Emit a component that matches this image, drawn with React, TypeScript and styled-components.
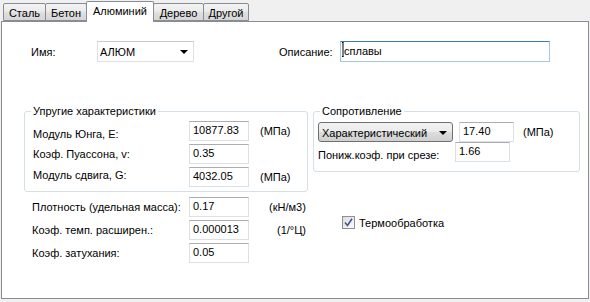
import React from "react";
import styled, { createGlobalStyle } from "styled-components";

const GlobalStyle = createGlobalStyle`
  html, body {
    margin: 0;
    padding: 0;
    background: #f0f0f0;
  }
  body {
    font-family: "Liberation Sans", Arial, sans-serif;
    font-size: 11px;
    color: #000;
  }
  * {
    box-sizing: border-box;
  }
`;

const Window = styled.div`
  width: 590px;
  height: 302px;
  background: #f0f0f0;
`;

const TabStrip = styled.div`
  display: flex;
  align-items: flex-end;
  height: 21px;
  padding-left: 3px;
  position: relative;
  z-index: 1;
`;

const Tab = styled.div<{ $active?: boolean; $width: number }>`
  display: flex;
  justify-content: center;
  align-items: ${(p) => (p.$active ? "flex-start" : "center")};
  width: ${(p) => p.$width}px;
  height: ${(p) => (p.$active ? "21px" : "18px")};
  padding-top: ${(p) => (p.$active ? "3px" : "1px")};
  margin: ${(p) => (p.$active ? "0 0 -1px -1px" : "0 0 0 -1px")};
  border: 1px solid #898c95;
  border-bottom: ${(p) => (p.$active ? "none" : "1px solid #898c95")};
  background: ${(p) =>
    p.$active
      ? "#fff"
      : "linear-gradient(#f3f3f3, #ebebeb 45%, #dedede 55%, #d6d6d6)"};
  border-radius: 2px 2px 0 0;
  position: relative;
  z-index: ${(p) => (p.$active ? 2 : 0)};
  white-space: nowrap;
  &:first-child {
    margin-left: 0;
  }
`;

const Panel = styled.div`
  margin-left: 1px;
  width: 588px;
  height: 278px;
  background: #fff;
  border: 1px solid #898c95;
  padding: 19px 0 0 1px;
`;

const TopRow = styled.div`
  display: flex;
  align-items: center;
  height: 21px;
  padding-left: 28px;
`;

const FieldLabel = styled.span<{ $width: number; $gap?: number; $shift?: number }>`
  width: ${(p) => p.$width}px;
  margin-left: ${(p) => p.$gap ?? 0}px;
  position: relative;
  top: ${(p) => p.$shift ?? 0}px;
  flex: none;
  white-space: nowrap;
`;

const ComboBox = styled.div<{ $width: number }>`
  display: flex;
  align-items: center;
  justify-content: space-between;
  width: ${(p) => p.$width}px;
  height: 21px;
  padding: 0 5px 0 2px;
  border: 1px solid #dcdfe5;
  border-top-color: #c9ccd3;
  background: #fff;
`;

const ButtonCombo = styled.div<{ $width: number }>`
  display: flex;
  align-items: center;
  justify-content: space-between;
  width: ${(p) => p.$width}px;
  height: 20px;
  padding: 1px 5px 0 3px;
  border: 1px solid #707070;
  border-radius: 3px;
  background: linear-gradient(#f2f2f2, #ebebeb 48%, #dddddd 52%, #cfcfcf);
`;

const Arrow = styled.span`
  width: 0;
  height: 0;
  border-left: 4px solid transparent;
  border-right: 4px solid transparent;
  border-top: 4px solid #000;
`;

const TextBox = styled.input<{ $width: number; $focused?: boolean; $gap?: number }>`
  width: ${(p) => p.$width}px;
  height: 20px;
  padding: 0 3px 2px;
  margin: 0 0 0 ${(p) => p.$gap ?? 0}px;
  border: 1px solid ${(p) => (p.$focused ? "#a4c9e3" : "#dcdfe5")};
  border-top-color: ${(p) => (p.$focused ? "#3d7bad" : "#abadb3")};
  border-radius: 0;
  outline: none;
  background: #fff;
  font-family: "Liberation Sans", Arial, sans-serif;
  font-size: 11px;
  color: #000;
`;

const DescBox = styled.div`
  position: relative;
  height: 21px;
  & > input {
    height: 21px;
  }
`;

const Cursor = styled.svg`
  position: absolute;
  left: 1px;
  top: 1px;
`;

const Groups = styled.div`
  display: flex;
  align-items: flex-start;
  gap: 5px;
  margin-top: 43px;
  padding-left: 21px;
`;

const GroupBox = styled.fieldset<{ $width: number; $bottom: number }>`
  width: ${(p) => p.$width}px;
  margin: 0;
  padding: 0 0 ${(p) => p.$bottom}px;
  min-width: 0;
  border: 1px solid #d5dfe5;
  border-radius: 3px;
`;

const Legend = styled.legend`
  margin-left: 6px;
  padding: 0 2px;
  line-height: 13px;
`;

const FormGrid = styled.div<{ $label: number; $pad: number; $top: number }>`
  display: grid;
  grid-template-columns: ${(p) => p.$label}px 60px auto;
  grid-auto-rows: 20px;
  row-gap: 3px;
  align-items: center;
  margin-top: ${(p) => p.$top}px;
  padding-left: ${(p) => p.$pad}px;
`;

const BottomGrid = styled(FormGrid)`
  width: 310px;
`;

const RowLabel = styled.span<{ $shift?: number }>`
  white-space: nowrap;
  position: relative;
  top: ${(p) => p.$shift ?? 0}px;
`;

const Unit = styled.span<{ $indent: number }>`
  padding-left: ${(p) => p.$indent}px;
  white-space: nowrap;
`;

const ResistRow = styled.div<{ $top: number }>`
  display: flex;
  align-items: center;
  height: 20px;
  margin-top: ${(p) => p.$top}px;
  padding-left: 4px;
`;

const BottomArea = styled.div`
  display: flex;
  margin-top: 5px;
  padding-left: 29px;
`;

const CheckColumn = styled.label`
  display: flex;
  align-items: center;
  gap: 4px;
  height: 13px;
  margin-top: 19px;
`;

const CheckBox = styled.span`
  display: flex;
  align-items: center;
  justify-content: center;
  width: 13px;
  height: 13px;
  border: 1px solid #8f8f8f;
  background: linear-gradient(135deg, #dcdcdc, #fbfbfb);
`;

const tabs = [
  { name: "Сталь", width: 43 },
  { name: "Бетон", width: 42 },
  { name: "Алюминий", width: 68 },
  { name: "Дерево", width: 51 },
  { name: "Другой", width: 46 },
];

export default function App() {
  return (
    <Window>
      <GlobalStyle />
      <TabStrip>
        {tabs.map((t) => (
          <Tab key={t.name} $width={t.width} $active={t.name === "Алюминий"}>
            {t.name}
          </Tab>
        ))}
      </TabStrip>
      <Panel>
        <TopRow>
          <FieldLabel $width={66}>Имя:</FieldLabel>
          <ComboBox $width={97}>
            АЛЮМ
            <Arrow />
          </ComboBox>
          <FieldLabel $width={61} $gap={85}>
            Описание:
          </FieldLabel>
          <DescBox>
            <TextBox $width={210} $focused defaultValue="сплавы" />
            <Cursor width="5" height="15" viewBox="0 0 5 15">
              <path d="M1 0.5h1.5M2 0.5v14M1 14.5h1.5" stroke="#000" strokeWidth="1" fill="none" />
            </Cursor>
          </DescBox>
        </TopRow>

        <Groups>
          <GroupBox $width={284} $bottom={4}>
            <Legend>Упругие характеристики</Legend>
            <FormGrid $label={156} $pad={8} $top={3}>
              <RowLabel $shift={3}>Модуль Юнга, E:</RowLabel>
              <TextBox $width={60} defaultValue="10877.83" />
              <Unit $indent={11}>(МПа)</Unit>
              <RowLabel>Коэф. Пуассона, v:</RowLabel>
              <TextBox $width={60} defaultValue="0.35" />
              <span />
              <RowLabel $shift={-2}>Модуль сдвига, G:</RowLabel>
              <TextBox $width={60} defaultValue="4032.05" />
              <Unit $indent={11}>(МПа)</Unit>
            </FormGrid>
          </GroupBox>

          <GroupBox $width={267} $bottom={9}>
            <Legend>Сопротивление</Legend>
            <ResistRow $top={4}>
              <ButtonCombo $width={135}>
                Характеристический
                <Arrow />
              </ButtonCombo>
              <TextBox $width={55} $gap={6} defaultValue="17.40" />
              <Unit $indent={9}>(МПа)</Unit>
            </ResistRow>
            <ResistRow $top={0}>
              <FieldLabel $width={137} $shift={3}>
                Пониж.коэф. при срезе:
              </FieldLabel>
              <TextBox $width={55} defaultValue="1.66" />
            </ResistRow>
          </GroupBox>
        </Groups>

        <BottomArea>
          <BottomGrid $label={157} $pad={0} $top={0}>
            <RowLabel>Плотность (удельная масса):</RowLabel>
            <TextBox $width={60} defaultValue="0.17" />
            <Unit $indent={20}>(кН/м3)</Unit>
            <RowLabel>Коэф. темп. расширен.:</RowLabel>
            <TextBox $width={60} defaultValue="0.000013" />
            <Unit $indent={28}>(1/°Ц)</Unit>
            <RowLabel>Коэф. затухания:</RowLabel>
            <TextBox $width={60} defaultValue="0.05" />
            <span />
          </BottomGrid>
          <CheckColumn>
            <CheckBox>
              <svg width="9" height="9" viewBox="0 0 9 9">
                <path d="M1 4.5l2.5 3L8 0.8" stroke="#3f55a0" strokeWidth="1.6" fill="none" />
              </svg>
            </CheckBox>
            Термообработка
          </CheckColumn>
        </BottomArea>
      </Panel>
    </Window>
  );
}
